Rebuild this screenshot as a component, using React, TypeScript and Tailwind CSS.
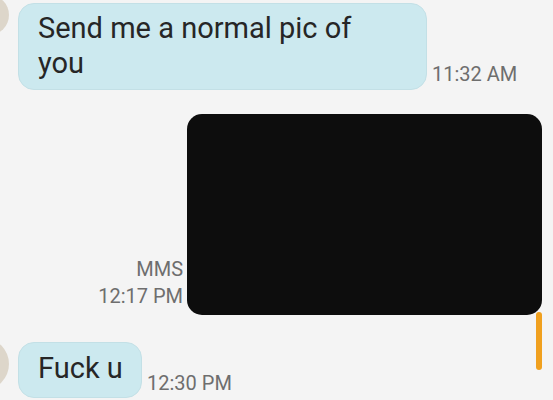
export default function App() {
  return (
    <div className="relative w-[553px] h-[400px] overflow-hidden bg-[#f4f4f4] font-['Roboto',sans-serif]">
      <IncomingMessage
        avatarClass="mt-[-8px] self-start"
        bubbleClass="w-[409px] h-[87px] pt-[7px]"
        time="11:32 AM"
        timeClass="mb-[5px]"
      >
        Send me a normal pic of
        <br />
        you
      </IncomingMessage>

      <div className="flex justify-end items-end mt-[24px] pr-[11px]">
        <div className="flex flex-col items-end mr-[4px] mb-[5px] text-[20px] leading-[27px] text-[#6e6e6e]">
          <span>MMS</span>
          <span>12:17 PM</span>
        </div>
        <div className="w-[355px] h-[201px] rounded-[15px] bg-[#0d0d0d]" />
      </div>

      <div className="mt-[24px]">
        <IncomingMessage
          avatarClass="mt-[-4px] self-start h-[52px] w-[52px] ml-[-43px]"
          bubbleClass="w-[124px] h-[56px] pt-[8px]"
          time="12:30 PM"
          timeClass="mb-[4px]"
        >
          Fuck u
        </IncomingMessage>
      </div>

      <div className="absolute left-[536px] top-[312px] w-[6px] h-[58px] rounded-full bg-[#f0a01e]" />
    </div>
  )
}

function IncomingMessage({
  children,
  avatarClass,
  bubbleClass,
  time,
  timeClass,
}: {
  children: React.ReactNode
  avatarClass: string
  bubbleClass: string
  time: string
  timeClass: string
}) {
  return (
    <div className="flex items-end pt-[3px]">
      <div className={`shrink-0 w-[40px] h-[40px] ml-[-31px] rounded-full bg-[#ddd6ca] ${avatarClass}`} />
      <div
        className={`ml-[9px] shrink-0 rounded-[16px] bg-[#cce9ef] border border-[#c3e0e6] pl-[19px] text-[29px] leading-[35px] text-[#262626] whitespace-nowrap ${bubbleClass}`}
      >
        {children}
      </div>
      <span className={`ml-[5px] text-[20px] leading-[22px] text-[#6e6e6e] whitespace-nowrap ${timeClass}`}>
        {time}
      </span>
    </div>
  )
}
